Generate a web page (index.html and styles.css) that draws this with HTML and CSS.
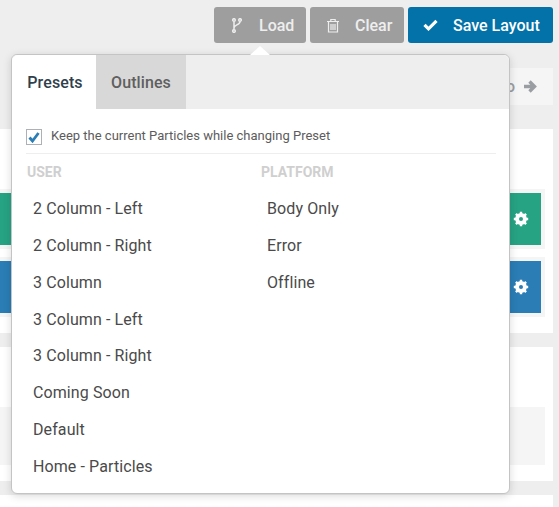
FILE: index.html
```html
<!DOCTYPE html>
<html lang="en">
<head>
    <meta charset="UTF-8" />
    <title>Layout Manager</title>
    <link rel="stylesheet" href="styles.css">
</head>
<body>
<div class="toolbar">
    <button class="btn btn-grey btn-load">
        <svg class="btn-icon" width="10" height="15" viewBox="0 0 10 15"><g fill="none" stroke="#eee" stroke-width="1.5"><circle cx="2" cy="2" r="1.3"/><circle cx="8" cy="2" r="1.3"/><circle cx="2" cy="13" r="1.3"/><path d="M2 3.4v8.2M8 3.4c0 4-6 3-6 6.5"/></g></svg>
        <span>Load</span>
    </button>
    <button class="btn btn-grey btn-clear">
        <svg class="btn-icon" width="14" height="15" viewBox="0 0 14 15"><g fill="none" stroke="#eee" stroke-width="1.2"><path d="M1 3.5h12M4.8 3.5V1.5h4.4v2M2.5 3.5v10.5h9V3.5M5 6v6M7 6v6M9 6v6"/></g></svg>
        <span>Clear</span>
    </button>
    <button class="btn btn-blue btn-save">
        <svg class="btn-icon" width="15" height="12" viewBox="0 0 15 12"><path d="M1.5 5.8l4 4 8-8" fill="none" stroke="#fff" stroke-width="3.2"/></svg>
        <span>Save Layout</span>
    </button>
</div>

<div class="next-row">
    <div class="next-box">
        <span class="next-text">o</span>
        <svg width="14" height="13" viewBox="0 0 14 13"><path d="M1 6.5h10M6.5 1.5l5 5-5 5" fill="none" stroke="#9a9ea3" stroke-width="3.4"/></svg>
    </div>
</div>

<section class="panel panel-blocks">
    <div class="block-row">
        <div class="block block-green">
            <svg class="gear" width="16" height="16" viewBox="0 0 16 16"><circle cx="8" cy="8" r="4.4" fill="none" stroke="#fff" stroke-width="3"/><path d="M8 .8v14.4M.8 8h14.4M2.9 2.9l10.2 10.2M13.1 2.9L2.9 13.1" stroke="#fff" stroke-width="2.4"/><circle cx="8" cy="8" r="2" fill="#26a383"/></svg>
        </div>
    </div>
    <div class="block-row">
        <div class="block block-blue">
            <svg class="gear" width="16" height="16" viewBox="0 0 16 16"><circle cx="8" cy="8" r="4.4" fill="none" stroke="#fff" stroke-width="3"/><path d="M8 .8v14.4M.8 8h14.4M2.9 2.9l10.2 10.2M13.1 2.9L2.9 13.1" stroke="#fff" stroke-width="2.4"/><circle cx="8" cy="8" r="2" fill="#2a7db5"/></svg>
        </div>
    </div>
</section>

<section class="panel panel-lower">
    <div class="lower-block"></div>
</section>

<section class="panel panel-last"></section>

<div class="popover">
    <div class="popover-arrow"></div>
    <div class="tabs">
        <div class="tab tab-active">Presets</div>
        <div class="tab tab-off">Outlines</div>
    </div>
    <div class="popover-body">
        <label class="keep">
            <span class="checkbox">
                <svg width="12" height="11" viewBox="0 0 12 11"><path d="M1.5 5.5l3 3.5 6-8" fill="none" stroke="#2a7db5" stroke-width="2.8"/></svg>
            </span>
            Keep the current Particles while changing Preset
        </label>
        <div class="columns">
            <div class="col col-user">
                <h4>USER</h4>
                <ul>
                    <li>2 Column - Left</li>
                    <li>2 Column - Right</li>
                    <li>3 Column</li>
                    <li>3 Column - Left</li>
                    <li>3 Column - Right</li>
                    <li>Coming Soon</li>
                    <li>Default</li>
                    <li>Home - Particles</li>
                </ul>
            </div>
            <div class="col">
                <h4>PLATFORM</h4>
                <ul>
                    <li>Body Only</li>
                    <li>Error</li>
                    <li>Offline</li>
                </ul>
            </div>
        </div>
    </div>
</div>
</body>
</html>
```
FILE: styles.css
```css
html, body {
    height: 100%;
}
body {
    font-family: 'Roboto', sans-serif;
    background: #eeeeee;
    margin: 0;
    padding: 0;
    overflow: hidden;
    color: #4a4a4a;
}
.toolbar {
    display: flex;
    justify-content: flex-end;
    gap: 4px;
    padding: 7px 6px 0 0;
}
.btn {
    display: flex;
    align-items: center;
    height: 36px;
    border: none;
    border-radius: 3px;
    color: #fff;
    font-family: 'Roboto', sans-serif;
    font-weight: 500;
    font-size: 16px;
    padding: 0;
}
.btn-grey {
    background: #9e9e9e;
    color: #eeeeee;
}
.btn-blue {
    background: #0272a9;
}
.btn-load {
    width: 92px;
    padding-left: 18px;
}
.btn-load span {
    margin-left: 17px;
}
.btn-clear {
    width: 94px;
    padding-left: 16px;
}
.btn-clear span {
    margin-left: 15px;
}
.btn-save {
    width: 145px;
    padding-left: 15px;
}
.btn-save span {
    margin-left: 15px;
}
.next-row {
    display: flex;
    justify-content: flex-end;
    padding: 25px 6px 0 0;
}
.next-box {
    display: flex;
    align-items: center;
    justify-content: flex-end;
    gap: 8px;
    width: 60px;
    height: 37px;
    box-sizing: border-box;
    padding-right: 16px;
    background: #f5f5f5;
    color: #9a9ea3;
    font-weight: 500;
    font-size: 16px;
}
.panel {
    background: #fff;
    margin-right: 6px;
}
.panel-blocks {
    margin-top: 24px;
    height: 204px;
    box-sizing: border-box;
    padding-top: 60px;
}
.block-row {
    background: #f5f5f5;
    padding: 4px 4px 4px 0;
    margin-right: 8px;
    margin-bottom: 8px;
    height: 52px;
}
.block {
    height: 52px;
    display: flex;
    align-items: center;
    justify-content: flex-end;
    padding-right: 12px;
}
.block-green {
    background: #26a383;
}
.block-blue {
    background: #2a7db5;
}
.panel-lower {
    margin-top: 14px;
    height: 134px;
    box-sizing: border-box;
    padding-top: 60px;
}
.lower-block {
    height: 58px;
    background: #f5f5f5;
    margin-right: 8px;
}
.panel-last {
    margin-top: 14px;
    height: 12px;
}
.popover {
    position: absolute;
    left: 11px;
    top: 54px;
    width: 499px;
    height: 440px;
    box-sizing: border-box;
    background: #fff;
    border: 1px solid #c4c4c4;
    border-radius: 6px;
    box-shadow: 0 2px 8px rgba(0, 0, 0, 0.15);
}
.popover-arrow {
    position: absolute;
    left: 238px;
    top: -9px;
    width: 0;
    height: 0;
    border-left: 10px solid transparent;
    border-right: 10px solid transparent;
    border-bottom: 9px solid #fff;
}
.tabs {
    display: flex;
    height: 54px;
    background: #eeeeee;
    border-radius: 6px 6px 0 0;
}
.tab {
    display: flex;
    align-items: center;
    justify-content: center;
    font-size: 16px;
    font-weight: 500;
    letter-spacing: 0.1px;
}
.tab-active {
    width: 84px;
    box-sizing: border-box;
    padding-left: 2px;
    background: #fff;
    color: #2f3f4c;
    border-radius: 6px 0 0 0;
}
.tab-off {
    width: 90px;
    background: #d8d8d8;
    color: #5f5f5f;
}
.popover-body {
    padding: 0 13px 0 14px;
}
.keep {
    display: flex;
    align-items: center;
    gap: 9px;
    height: 45px;
    box-sizing: border-box;
    padding-top: 9px;
    border-bottom: 1px solid #eeeeee;
    font-size: 13px;
    color: #5c5c5c;
}
.checkbox {
    display: flex;
    align-items: center;
    justify-content: center;
    width: 16px;
    height: 16px;
    margin-top: 3px;
    box-sizing: border-box;
    border: 1px solid #adb1b5;
}
.columns {
    display: flex;
}
.col-user {
    width: 235px;
}
.col-user h4,
.col-user ul {
    margin-left: 1px;
}
h4 {
    margin: 11px 0 0;
    font-size: 14px;
    font-weight: 700;
    color: #cfcfcf;
    line-height: 15px;
}
ul {
    list-style: none;
    margin: 10px 0 0;
    padding: 0 0 0 6px;
}
li {
    height: 36.86px;
    line-height: 37px;
    font-size: 16px;
    letter-spacing: 0.1px;
    color: #4a4a4a;
}
```
